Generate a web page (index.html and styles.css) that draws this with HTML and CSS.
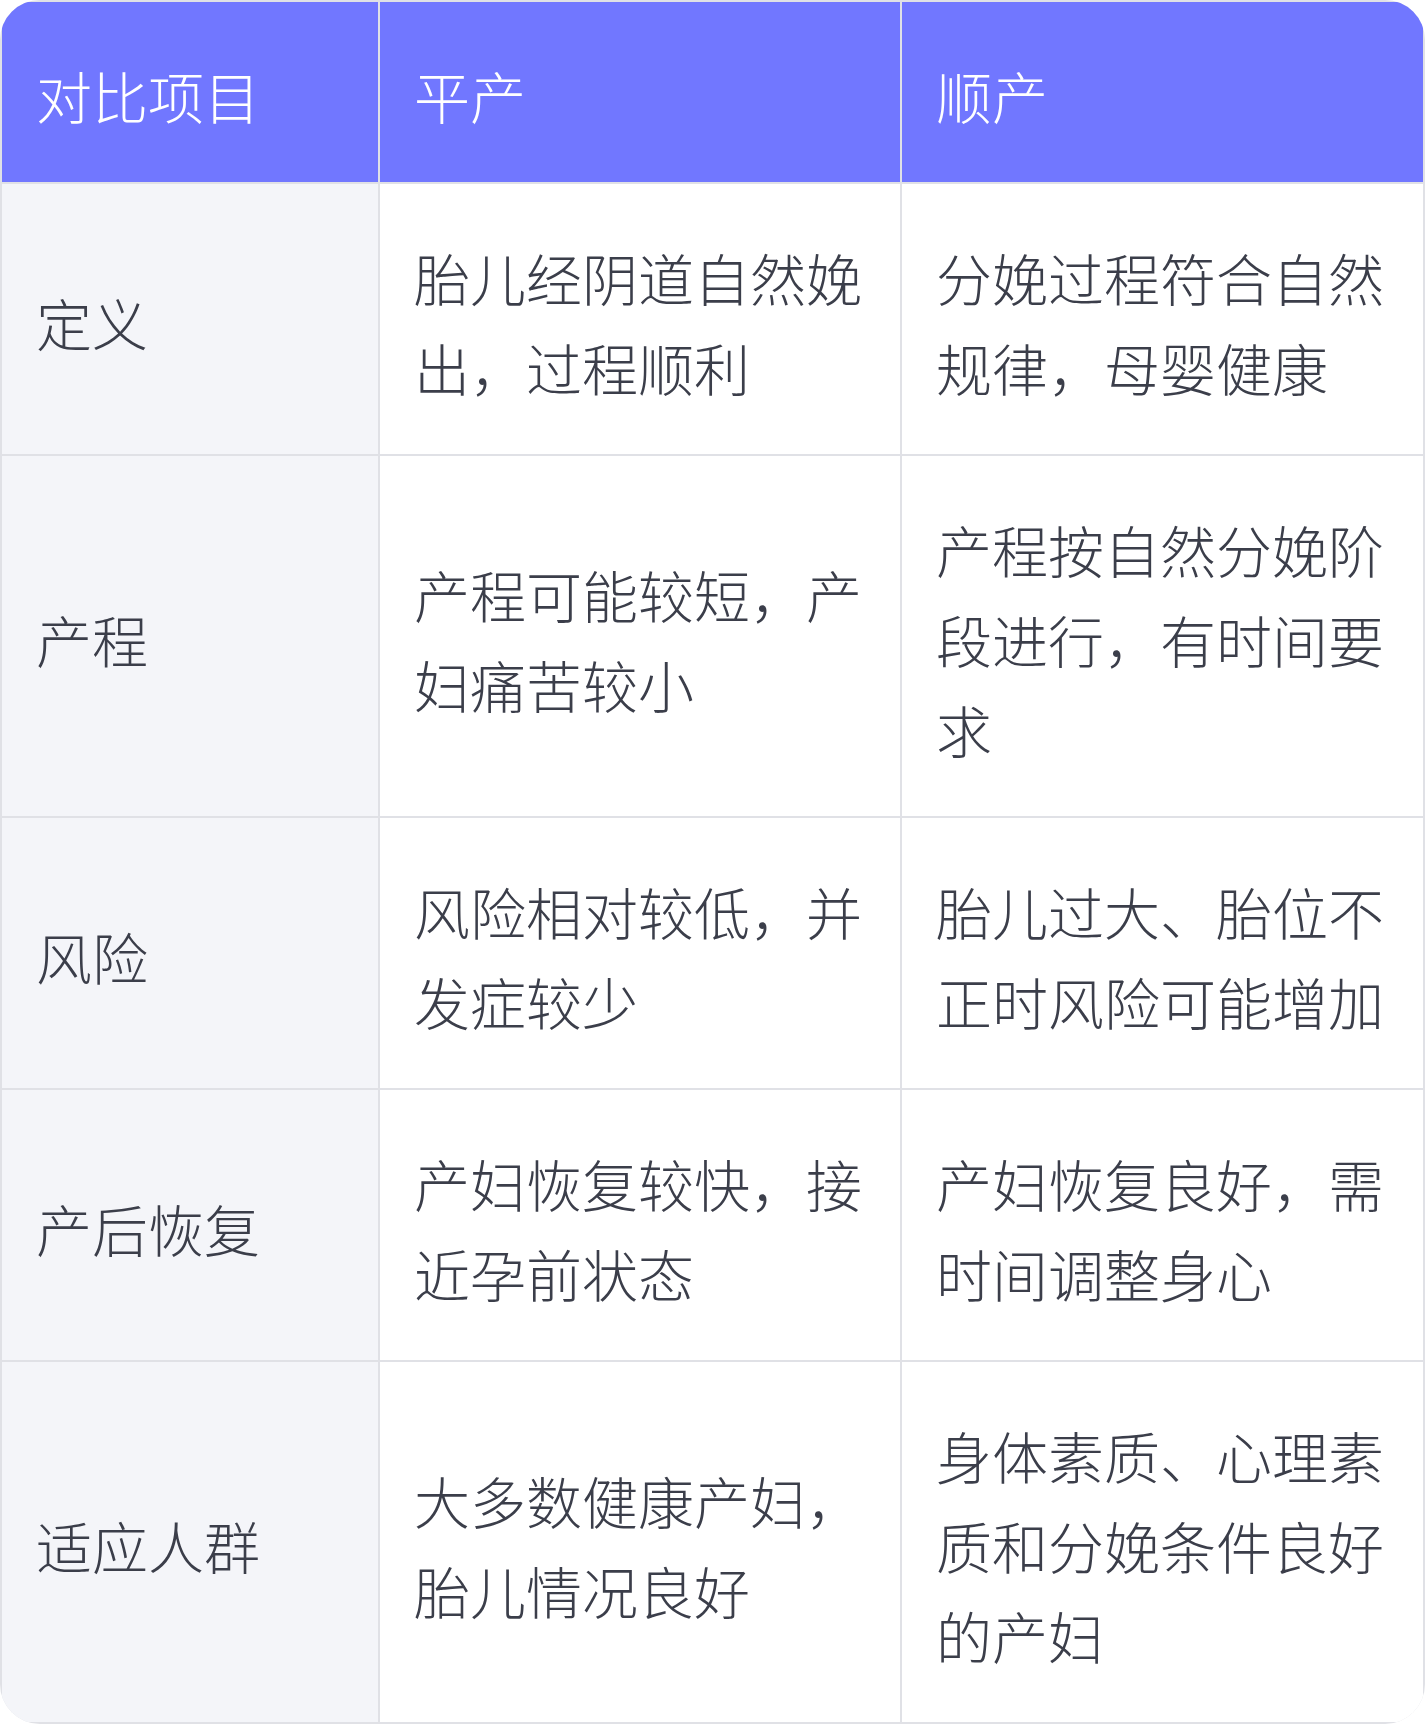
FILE: index.html
```html
<!DOCTYPE html>
<html lang="zh-CN">
<head>
<meta charset="utf-8">
<link rel="stylesheet" href="styles.css">
</head>
<body>
<div class="table">
  <div class="cell head">对比项目</div>
  <div class="cell head">平产</div>
  <div class="cell head">顺产</div>

  <div class="cell label">定义</div>
  <div class="cell">胎儿经阴道自然娩出，过程顺利</div>
  <div class="cell">分娩过程符合自然规律，母婴健康</div>

  <div class="cell label">产程</div>
  <div class="cell">产程可能较短，产妇痛苦较小</div>
  <div class="cell">产程按自然分娩阶段进行，有时间要求</div>

  <div class="cell label">风险</div>
  <div class="cell">风险相对较低，并发症较少</div>
  <div class="cell">胎儿过大、胎位不正时风险可能增加</div>

  <div class="cell label">产后恢复</div>
  <div class="cell">产妇恢复较快，接近孕前状态</div>
  <div class="cell">产妇恢复良好，需时间调整身心</div>

  <div class="cell label">适应人群</div>
  <div class="cell">大多数健康产妇，胎儿情况良好</div>
  <div class="cell">身体素质、心理素质和分娩条件良好的产妇</div>
</div>
</body>
</html>
```

FILE: styles.css
```css
html, body {
  margin: 0;
  padding: 0;
  background: #ffffff;
}

.table {
  display: grid;
  grid-template-columns: 376px 520px 521px;
  gap: 2px;
  padding: 2px;
  width: 1425px;
  box-sizing: border-box;
  background: #e0e1e6;
  border-radius: 40px;
  overflow: hidden;
  font-family: "Noto Sans CJK SC", "Noto Sans", sans-serif;
  font-weight: 300;
  font-size: 56px;
  line-height: 90px;
  color: #3b3e4a;
}

.cell {
  background: #ffffff;
  padding: 48px 35px 42px 34px;
  display: flex;
  align-items: center;
}

.cell.head {
  background: #7177ff;
  color: #ffffff;
}

.cell.label {
  background: #f4f5f9;
}
```
